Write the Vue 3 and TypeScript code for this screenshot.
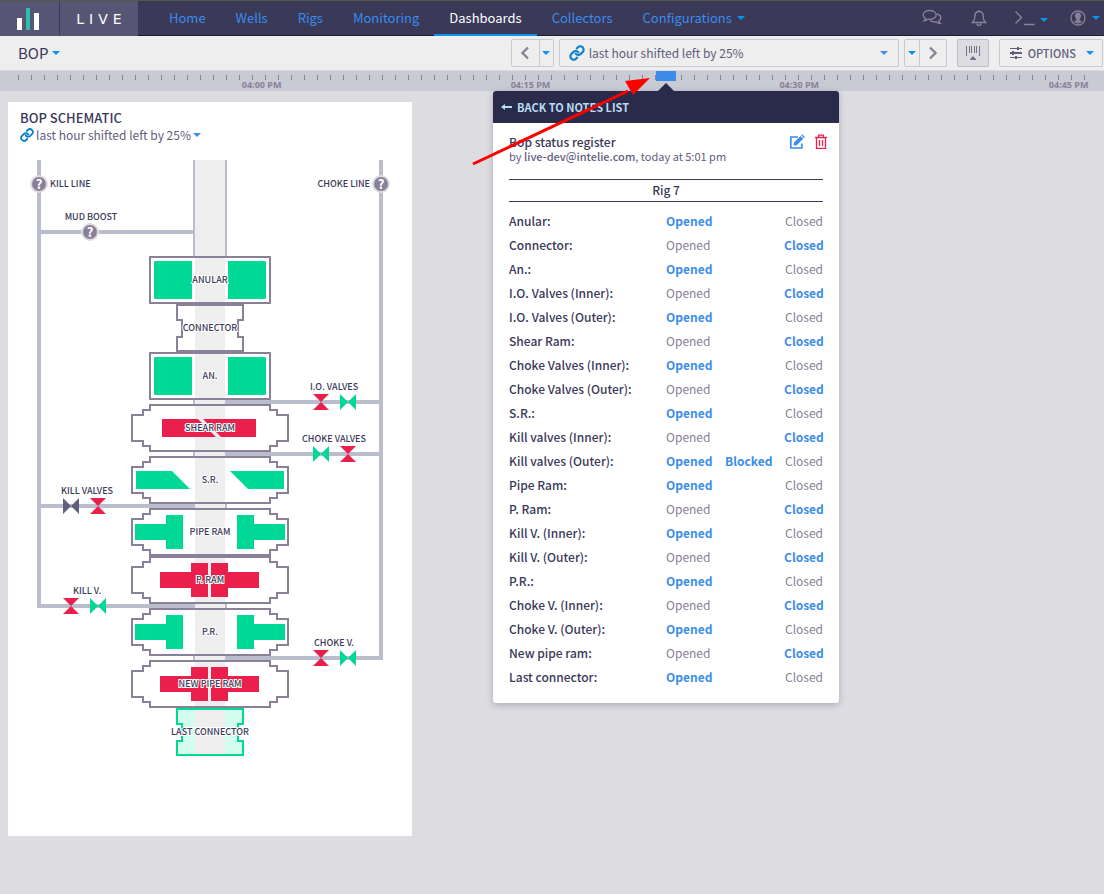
<script setup lang="ts">
import { ref } from 'vue'

interface NavItem {
  label: string
  active?: boolean
  menu?: boolean
}

const nav: NavItem[] = [
  { label: 'Home' },
  { label: 'Wells' },
  { label: 'Rigs' },
  { label: 'Monitoring' },
  { label: 'Dashboards', active: true },
  { label: 'Collectors' },
  { label: 'Configurations', menu: true },
]

const range = ref('last hour shifted left by 25%')

const hours = [
  { label: '04:00 PM', at: 23.7 },
  { label: '04:15 PM', at: 48.05 },
  { label: '04:30 PM', at: 72.4 },
  { label: '04:45 PM', at: 96.8 },
]
const noteAt = 60.33

type State = 'opened' | 'closed'
interface Row {
  name: string
  state: State
  blocked?: boolean
}

const rows: Row[] = [
  { name: 'Anular', state: 'opened' },
  { name: 'Connector', state: 'closed' },
  { name: 'An.', state: 'opened' },
  { name: 'I.O. Valves (Inner)', state: 'closed' },
  { name: 'I.O. Valves (Outer)', state: 'opened' },
  { name: 'Shear Ram', state: 'closed' },
  { name: 'Choke Valves (Inner)', state: 'opened' },
  { name: 'Choke Valves (Outer)', state: 'closed' },
  { name: 'S.R.', state: 'opened' },
  { name: 'Kill valves (Inner)', state: 'closed' },
  { name: 'Kill valves (Outer)', state: 'opened', blocked: true },
  { name: 'Pipe Ram', state: 'opened' },
  { name: 'P. Ram', state: 'closed' },
  { name: 'Kill V. (Inner)', state: 'opened' },
  { name: 'Kill V. (Outer)', state: 'closed' },
  { name: 'P.R.', state: 'opened' },
  { name: 'Choke V. (Inner)', state: 'closed' },
  { name: 'Choke V. (Outer)', state: 'opened' },
  { name: 'New pipe ram', state: 'closed' },
  { name: 'Last connector', state: 'opened' },
]

type Kind = 'anular' | 'connector' | 'shear' | 'pipe'
interface Part {
  label: string
  kind: Kind
  y: number
  state: State
}

/* Stack parts: x is measured from the bore axis, y from the part's top */
const parts: Part[] = [
  { label: 'ANULAR', kind: 'anular', y: 96, state: 'opened' },
  { label: 'CONNECTOR', kind: 'connector', y: 144, state: 'closed' },
  { label: 'AN.', kind: 'anular', y: 192, state: 'opened' },
  { label: 'SHEAR RAM', kind: 'shear', y: 244, state: 'closed' },
  { label: 'S.R.', kind: 'shear', y: 296, state: 'opened' },
  { label: 'PIPE RAM', kind: 'pipe', y: 348, state: 'opened' },
  { label: 'P. RAM', kind: 'pipe', y: 396, state: 'closed' },
  { label: 'P.R.', kind: 'pipe', y: 448, state: 'opened' },
  { label: 'NEW PIPE RAM', kind: 'pipe', y: 500, state: 'closed' },
  { label: 'LAST CONNECTOR', kind: 'connector', y: 548, state: 'opened' },
]

const ramBody =
  'M-60 1H60V6H67V11H78V37H67V42H60V47H-60V42H-67V37H-78V11H-67V6H-60Z'
const bodies: Record<Kind, string> = {
  anular: 'M-60 1H60V47H-60Z',
  connector: 'M-33 1H33V16H28V33H33V47H-33V33H-28V16H-33Z',
  shear: ramBody,
  pipe: ramBody,
}
const shapes: Record<string, string> = {
  'anular-opened': 'M-55 5H-18V43H-55L-56 42V6ZM55 5H18V43H55L56 42V6Z',
  'shear-closed': 'M-48 15H-12L6 33H-48ZM-7 15H46V33H11Z',
  'shear-opened': 'M-74 15H-38L-20 33H-74ZM20 15H74V33H38Z',
  'pipe-closed':
    'M-50 16H-19V7H-2V41H-19V32H-50ZM49 16H18V7H1V41H18V32H49Z',
  'pipe-opened':
    'M-75 16H-44V7H-27V41H-44V32H-75ZM75 16H44V7H27V41H44V32H75Z',
}
const actuator = (p: Part): string => shapes[`${p.kind}-${p.state}`] ?? ''

type ValveState = 'opened' | 'closed' | 'blocked'
interface ValvePair {
  label: string
  x: number
  y: number
  first: number
  states: [ValveState, ValveState]
}
const valves: ValvePair[] = [
  { label: 'I.O. VALVES', x: 326, y: 242, first: -13, states: ['closed', 'opened'] },
  { label: 'CHOKE VALVES', x: 326, y: 294, first: -13, states: ['opened', 'closed'] },
  { label: 'KILL VALVES', x: 79, y: 346, first: -16, states: ['blocked', 'closed'] },
  { label: 'KILL V.', x: 79, y: 446, first: -16, states: ['closed', 'opened'] },
  { label: 'CHOKE V.', x: 326, y: 498, first: -13, states: ['closed', 'opened'] },
]
const valveShape = (s: ValveState): string =>
  s === 'closed' ? 'M-8 -8H8L-8 8H8Z' : 'M-8 -8V8L8 -8V8Z'

const unknowns = [
  { x: 31, y: 24 },
  { x: 373, y: 24 },
  { x: 82, y: 72 },
]
</script>

<template>
  <div class="app">
    <header class="topbar">
      <a class="brand-mark" href="#" aria-label="Home page">
        <svg width="22" height="22" viewBox="0 0 22 22">
          <path d="M0 10h5v12H0zM17 5h5v17h-5z" fill="#fff" />
          <path d="M9 0h4v22H9z" fill="#2bbfae" />
        </svg>
      </a>
      <a class="brand-name" href="#"><span v-for="c in 'LIVE'" :key="c">{{ c }}</span></a>
      <nav class="nav">
        <a v-for="n in nav" :key="n.label" href="#" :class="{ active: n.active }">
          {{ n.label }}<i v-if="n.menu" class="caret"></i>
        </a>
      </nav>
      <div class="tools">
        <button type="button" aria-label="Chat">
          <svg width="20" height="18" viewBox="0 0 20 18" class="line">
            <path d="M7.500 1.500C3.900 1.500 1.200 3.400 1.200 6c0 1.500.9 2.800 2.300 3.600-.2.900-.7 1.500-1.300 2.100 1.500-.1 2.600-.7 3.500-1.500 5 .7 8.500-1.300 8.500-4.200 0-2.600-3-4.500-6.700-4.500z" />
            <path d="M14.800 5c2.400.5 4 1.900 4 3.900 0 1.400-.8 2.500-2.100 3.300.2.900.7 1.600 1.400 2.200-1.500-.1-2.700-.7-3.600-1.500-2.500.3-4.900-.2-6.300-1.700" />
          </svg>
        </button>
        <button type="button" aria-label="Notifications">
          <svg width="16" height="18" viewBox="0 0 16 18" class="line">
            <path d="M8 1v1.500M1.500 13.500c1.800-1.600 2.300-3.500 2.300-6 0-3 1.700-5 4.200-5s4.200 2 4.200 5c0 2.500.5 4.400 2.300 6z" />
            <path d="M6 14.500a2 2 0 0 0 4 0" />
          </svg>
        </button>
        <button type="button" aria-label="Console">
          <svg width="21" height="16" viewBox="0 0 21 16" class="line">
            <path d="M1.500 1.500l6 6-6 6M10 14.500h10.500" />
          </svg>
          <i class="caret low"></i>
        </button>
        <button type="button" aria-label="Account">
          <svg width="16" height="16" viewBox="0 0 16 16">
            <circle cx="8" cy="8" r="7" fill="none" stroke="#8a8098" stroke-width="1.300" />
            <path d="M8 2.500c2 0 3 1.300 3 3.200 0 1.300-.5 2.500-1.300 3.200v1.400l2.400 1.200c-1 1.300-2.500 2-4.100 2s-3.100-.7-4.100-2l2.400-1.200V8.900C5.500 8.200 5 7 5 5.700c0-1.900 1-3.200 3-3.200z" fill="#8a8098" />
          </svg>
          <i class="caret"></i>
        </button>
      </div>
    </header>

    <section class="toolbar">
      <button type="button" class="title" aria-haspopup="menu">BOP<i class="caret"></i></button>
      <div class="controls">
        <div class="group">
          <button type="button" class="step" aria-label="Previous">
            <svg width="10" height="14" viewBox="0 0 10 14"><path d="M8 1.500L2.500 7 8 12.500" class="chev" /></svg>
          </button>
          <button type="button" class="more" aria-label="Previous options"><i class="caret"></i></button>
        </div>
        <label class="range">
          <svg class="link" width="16" height="16" viewBox="0 0 24 24">
            <path d="M10 13a5 5 0 0 0 7.540.540l3-3a5 5 0 0 0-7.070-7.070l-1.720 1.710" />
            <path d="M14 11a5 5 0 0 0-7.540-.540l-3 3a5 5 0 0 0 7.070 7.070l1.710-1.710" />
          </svg>
          <select v-model="range" aria-label="Time range">
            <option>last hour shifted left by 25%</option>
          </select>
          <i class="caret soft"></i>
        </label>
        <div class="group">
          <button type="button" class="more" aria-label="Next options"><i class="caret"></i></button>
          <button type="button" class="step" aria-label="Next">
            <svg width="10" height="14" viewBox="0 0 10 14"><path d="M2 1.500L7.500 7 2 12.500" class="chev" /></svg>
          </button>
        </div>
        <button type="button" class="box pressed" aria-label="Timeline" aria-pressed="true">
          <svg width="16" height="16" viewBox="0 0 16 16" fill="#77728c">
            <path d="M1 1h1v10H1zM4 1h1v7H4zM6 1h1v7H6zM9 1h1v7H9zM11 1h1v7h-1zM14 1h1v10h-1zM8 11l3 3v1H5v-1z" />
          </svg>
        </button>
        <button type="button" class="box options" aria-haspopup="menu">
          <svg width="14" height="12" viewBox="0 0 14 12" fill="#5f5d7c">
            <path d="M1 1h12v1H1zM1 5h12v2H1zM1 10h12v1H1zM8 0h2v3H8zM3 4h2v4H3zM6 9h2v3H6z" />
          </svg>
          <span>OPTIONS</span>
          <i class="caret"></i>
        </button>
      </div>
    </section>

    <div class="timeline">
      <div class="ticks"></div>
      <span v-for="h in hours" :key="h.label" class="hour" :style="{ left: h.at + '%' }">{{ h.label }}</span>

      <div class="note" :style="{ left: noteAt + '%' }">
        <div class="flag"></div>
        <div class="pointer"></div>
        <article class="popover">
          <button type="button" class="back">
            <svg width="11" height="8" viewBox="0 0 11 8"><path d="M0 4l4-3v2h7v2H4v2z" fill="#b9dcf4" /></svg>
            <span>BACK TO NOTES LIST</span>
          </button>
          <div class="note-body">
            <div class="note-head">
              <div>
                <h2>Bop status register</h2>
                <p>by <b>live-dev@intelie.com</b>, today at 5:01 pm</p>
              </div>
              <div class="actions">
                <button type="button" aria-label="Edit">
                  <svg width="16" height="16" viewBox="0 0 16 16">
                    <path d="M9 3H1.800v11h11V9.500" fill="none" stroke="#3b8cec" stroke-width="1.700" />
                    <path d="M5 8.500L11.500 2l2.700 2.700L7.700 11.200 4.800 11.500zM12.200 1.300l1-1 2.700 2.700-1 1z" fill="#3b8cec" />
                  </svg>
                </button>
                <button type="button" aria-label="Delete">
                  <svg width="12" height="16" viewBox="0 0 12 16" fill="none" stroke="#ea1f4c" stroke-width="1.300">
                    <path d="M0 3.500h12M3.700 3.500V1.200h4.600v2.300M1.500 3.500v10.800h9V3.500M4.500 6v6M7.500 6v6" />
                  </svg>
                </button>
              </div>
            </div>
            <h3>Rig 7</h3>
            <table>
              <tbody>
                <tr v-for="r in rows" :key="r.name">
                  <th scope="row">{{ r.name }}:</th>
                  <td :class="{ on: r.state === 'opened' }">Opened</td>
                  <td class="on"><template v-if="r.blocked">Blocked</template></td>
                  <td class="end" :class="{ on: r.state === 'closed' }">Closed</td>
                </tr>
              </tbody>
            </table>
          </div>
        </article>
      </div>
    </div>

    <main class="board">
      <section class="panel">
        <h1>BOP SCHEMATIC</h1>
        <button type="button" class="panel-range" aria-haspopup="menu">
          <svg class="link" width="14" height="14" viewBox="0 0 24 24">
            <path d="M10 13a5 5 0 0 0 7.540.540l3-3a5 5 0 0 0-7.070-7.070l-1.720 1.710" />
            <path d="M14 11a5 5 0 0 0-7.540-.540l-3 3a5 5 0 0 0 7.070 7.070l1.710-1.710" />
          </svg>
          <span>{{ range }}</span>
          <i class="caret soft"></i>
        </button>
        <svg class="schematic" viewBox="0 0 404 600" role="img" aria-label="BOP schematic">
          <g fill="#b9bdcc">
            <path d="M185 0h2v596h-2zM217 0h2v596h-2z" />
            <path d="M29 0h4v444h154v4H29z" />
            <path d="M33 70h152v4H33zM33 344h154v4H33z" />
            <path d="M371 0h4v500H217v-4h154z" />
            <path d="M217 240h154v4H217zM217 292h154v4H217z" />
          </g>
          <path
            v-for="p in parts"
            :key="p.label"
            :d="bodies[p.kind]"
            :transform="`translate(202 ${p.y})`"
            :fill="p.kind === 'connector' && p.state === 'opened' ? '#d2fdee' : '#fff'"
          />
          <path d="M187 0h30v594h-30z" fill="#eee" />
          <g v-for="p in parts" :key="p.label" :transform="`translate(202 ${p.y})`">
            <path
              :d="bodies[p.kind]"
              fill="none"
              stroke-width="2"
              :stroke="p.kind === 'connector' && p.state === 'opened' ? '#00d896' : '#8a8098'"
            />
            <path :d="actuator(p)" :class="p.state" />
            <text y="27" class="halo">{{ p.label }}</text>
          </g>
          <g v-for="v in valves" :key="v.label" :transform="`translate(${v.x} ${v.y})`">
            <path :d="valveShape(v.states[0])" :class="v.states[0]" :transform="`translate(${v.first})`" />
            <path :d="valveShape(v.states[1])" :class="v.states[1]" :transform="`translate(${v.first + 27})`" />
            <text y="-12">{{ v.label }}</text>
          </g>
          <g v-for="u in unknowns" :key="u.x" :transform="`translate(${u.x} ${u.y})`">
            <circle r="9" fill="#dddce1" />
            <circle r="7" fill="#8a8098" />
            <text y="5" class="mark">?</text>
          </g>
          <text x="42" y="27" class="start">KILL LINE</text>
          <text x="362" y="27" class="finish">CHOKE LINE</text>
          <text x="83" y="60">MUD BOOST</text>
        </svg>
      </section>
    </main>

    <svg class="arrow" width="182" height="92" viewBox="0 0 182 92">
      <path d="M1 87L156 14" stroke="#f00" stroke-width="3" fill="none" />
      <path d="M178 1L153 4l8 14z" fill="#f00" />
    </svg>
  </div>
</template>

<style>
body {
  margin: 0;
  background: #dddce1;
}
</style>

<style scoped>
.app {
  position: relative;
  min-height: 100vh;
  font-family: 'Noto Sans CJK SC', 'Noto Sans', sans-serif;
  font-size: 12px;
  line-height: 16px;
  color: #5f5d7c;
}
button,
select {
  margin: 0;
  padding: 0;
  border: 0;
  background: none;
  font: inherit;
  color: inherit;
  cursor: pointer;
}
a {
  text-decoration: none;
}
svg {
  display: block;
  flex: none;
}
.caret {
  flex: none;
  width: 0;
  border: 4px solid transparent;
  border-top-color: #0b93f0;
  border-bottom: 0;
}
.caret.soft {
  border-top-color: #3b8cec;
}
.link {
  fill: none;
  stroke: #0a80cc;
  stroke-width: 3.2;
  stroke-linecap: round;
}

.topbar {
  display: flex;
  height: 36px;
  box-sizing: border-box;
  border-top: 1px solid #55554f;
  background: #3a3958;
}
.brand-mark,
.brand-name {
  display: flex;
  align-items: center;
  justify-content: center;
  background: #565674;
}
.brand-mark {
  width: 59px;
  padding-right: 3px;
  box-sizing: border-box;
}
.brand-name {
  width: 78px;
  margin-left: 1px;
  gap: 5px;
  color: #fff;
  font-family: 'DejaVu Sans', sans-serif;
  font-size: 14px;
}
.nav {
  display: flex;
  flex: 1;
  padding-left: 16px;
  border-bottom: 1px solid #1c1b33;
  font-size: 13px;
}
.nav a {
  display: flex;
  align-items: center;
  gap: 5px;
  padding: 0 15px;
  margin-bottom: -1px;
  border-bottom: 2px solid transparent;
  color: #3b8cec;
}
.nav a.active {
  color: #fff;
  border-bottom-color: #0b93f0;
}
.tools {
  display: flex;
  align-items: center;
  border-bottom: 1px solid #1c1b33;
  padding-right: 4px;
}
.tools button {
  display: flex;
  align-items: center;
  margin-left: 22px;
  gap: 6px;
}
.tools button:nth-child(2) {
  margin-left: 29px;
}
.tools button:nth-child(3) {
  margin-left: 27px;
  gap: 5px;
}
.low {
  margin-top: 4px;
}
.line {
  fill: none;
  stroke: #8a8098;
  stroke-width: 1.4;
}

.toolbar {
  display: flex;
  align-items: center;
  justify-content: space-between;
  height: 34px;
  padding: 0 1px 0 18px;
  background: #eee;
}
.title {
  display: flex;
  align-items: center;
  gap: 4px;
  font-size: 15px;
  color: #3a3958;
}
.controls {
  display: flex;
  align-items: center;
}
.group,
.range,
.box {
  display: flex;
  align-items: center;
  height: 28px;
  box-sizing: border-box;
  border: 1px solid #c8c9d4;
  border-radius: 2px;
}
.group button {
  display: flex;
  align-items: center;
  justify-content: center;
  height: 100%;
}
.group button + button {
  border-left: 1px solid #c8c9d4;
}
.step {
  width: 27px;
}
.more {
  width: 14px;
}
.chev {
  fill: none;
  stroke: #8a8098;
  stroke-width: 2.4;
}
.range {
  width: 340px;
  margin: 0 5px;
  padding: 0 10px 0 9px;
  gap: 4px;
}
.range select {
  flex: 1;
  appearance: none;
}
.box {
  justify-content: center;
  margin-left: 10px;
}
.pressed {
  width: 32px;
  background: #dddce1;
  border-color: #b9bdcc;
}
.options {
  padding: 0 8px 0 9px;
  gap: 5px;
  font-size: 11px;
  font-weight: 500;
}
.options .caret {
  margin-left: 5px;
}

.timeline {
  position: relative;
  height: 20px;
  border-top: 1px solid #d8d8de;
  background: #c8cad4;
  z-index: 1;
}
.ticks {
  height: 5px;
  margin: 0 18px;
  position: relative;
  top: 4px;
  background: repeating-linear-gradient(90deg, #8a8098 0 1px, transparent 1px 13px);
}
.hour {
  position: absolute;
  top: 9px;
  transform: translateX(-50%);
  font-family: 'Open Sans', sans-serif;
  font-size: 9px;
  line-height: 10px;
  font-weight: 700;
  white-space: nowrap;
  color: #8a8098;
}
.note {
  position: absolute;
  top: 0;
  width: 346px;
  transform: translateX(-50%);
}
.flag {
  width: 20px;
  height: 10px;
  margin: 0 auto;
  background: #3b8cec;
}
.pointer {
  width: 0;
  margin: 2px auto 0;
  border: 8px solid transparent;
  border-top: 0;
  border-bottom-color: #2a2a4a;
}
.popover {
  overflow: hidden;
  border-radius: 3px;
  background: #fff;
  box-shadow: 0 2px 6px rgba(58, 57, 88, 0.3);
}
.back {
  display: flex;
  align-items: center;
  gap: 5px;
  width: 100%;
  height: 32px;
  padding: 0 8px;
  background: #2a2a4a;
  color: #b9dcf4;
  font-size: 11px;
  font-weight: 700;
}
.note-body {
  padding: 11px 16px 14px;
}
.note-head {
  display: flex;
  justify-content: space-between;
  height: 45px;
}
h1,
h2,
h3,
p {
  margin: 0;
}
h2 {
  font-size: 12px;
  line-height: 15px;
  font-weight: 500;
  color: #3a3958;
}
p {
  font-size: 11px;
  line-height: 14px;
}
p b {
  font-weight: 500;
}
.actions {
  display: flex;
  align-items: flex-start;
  gap: 10px;
  margin-right: -4px;
}
h3 {
  padding-bottom: 2px;
  border: solid #3a3958;
  border-width: 1px 0;
  font-size: 12px;
  line-height: 19px;
  font-weight: 500;
  text-align: center;
  color: #3a3958;
}
table {
  width: 100%;
  margin-top: 7px;
  border-collapse: collapse;
  table-layout: fixed;
  font-size: 12px;
  line-height: 24px;
}
th,
td {
  padding: 0;
  height: 24px;
  text-align: left;
  color: #8a8098;
  font-weight: 400;
}
th {
  width: 157px;
  font-weight: 500;
  color: #3a3958;
}
td {
  width: 59px;
}
td.end {
  width: auto;
  text-align: right;
}
td.on {
  font-weight: 700;
  color: #3b8cec;
}

.board {
  display: grid;
  grid-template-columns: 404fr 684fr;
  padding: 11px 8px;
}
.panel {
  padding: 7px 0 76px;
  background: #fff;
}
h1 {
  padding: 0 12px;
  font-size: 13px;
  line-height: 17px;
  font-weight: 500;
  color: #3a3958;
}
.panel-range {
  display: flex;
  align-items: center;
  gap: 2px;
  margin: 0 12px 17px;
  line-height: 17px;
}
.schematic {
  width: 100%;
}
text {
  font-size: 9px;
  font-weight: 500;
  text-anchor: middle;
  fill: #3a3958;
}
.halo {
  stroke: #fff;
  stroke-width: 2px;
  paint-order: stroke;
}
.start {
  text-anchor: start;
}
.finish {
  text-anchor: end;
}
.mark {
  font-size: 13px;
  font-weight: 700;
  fill: #fff;
}
.opened {
  fill: #00d896;
}
.closed {
  fill: #ea1f4c;
}
.blocked {
  fill: #5f6080;
}
.arrow {
  position: absolute;
  left: 472px;
  top: 77px;
  z-index: 2;
  pointer-events: none;
}
</style>
